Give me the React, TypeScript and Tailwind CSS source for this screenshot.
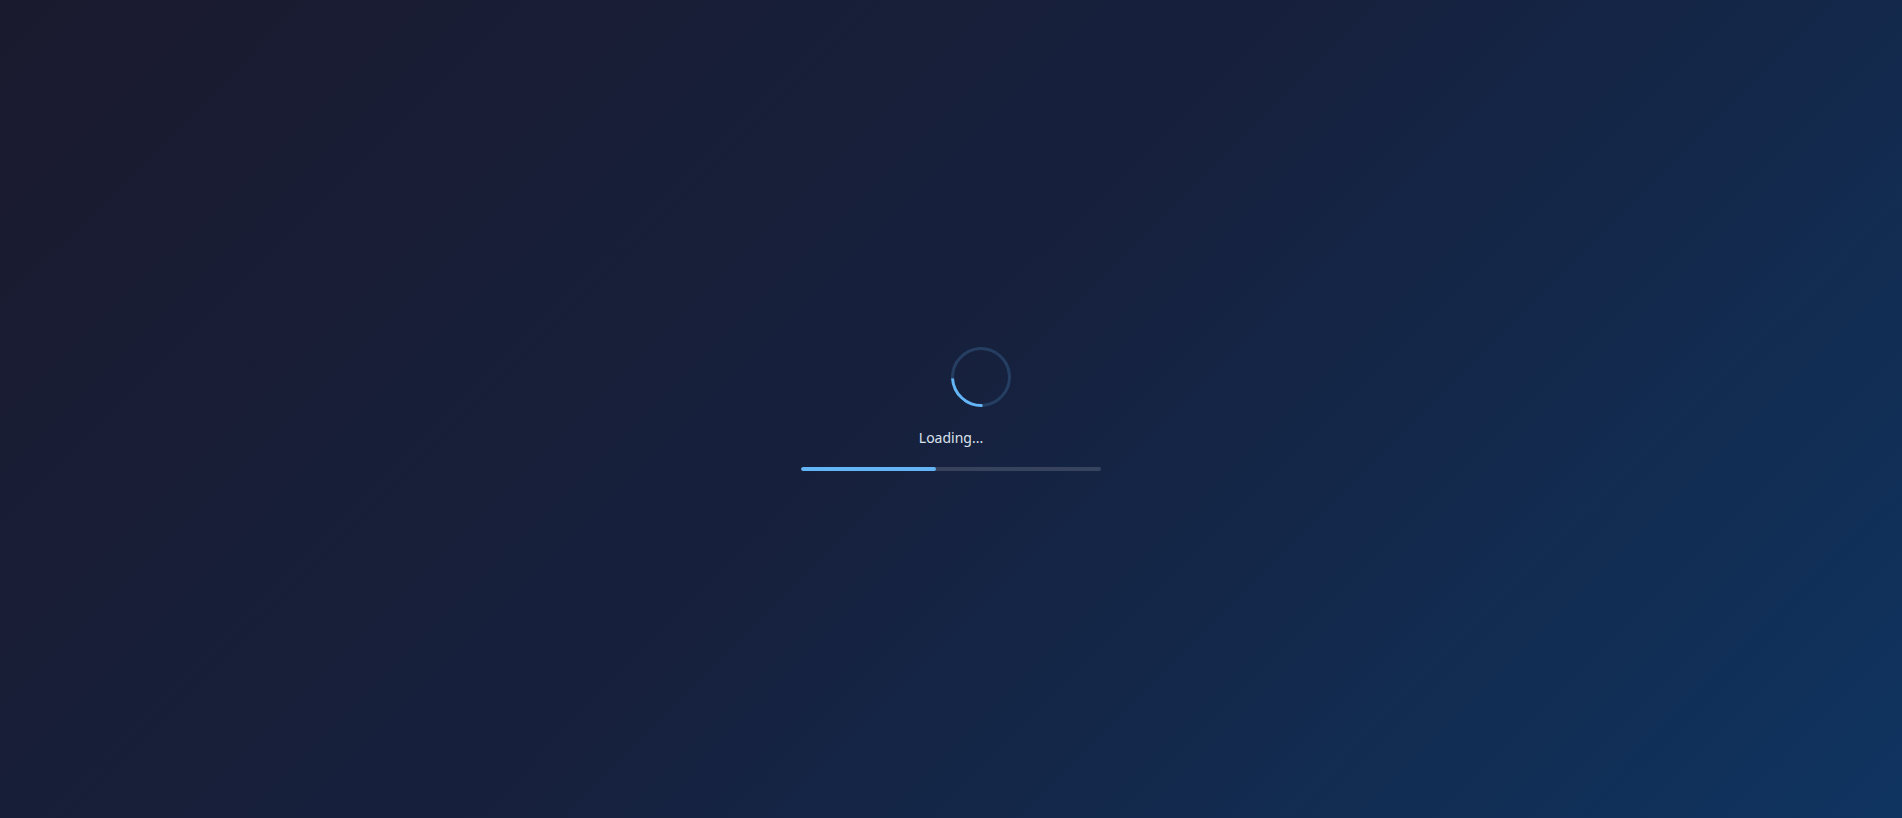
export default function App() {
  const progress = 45;

  return (
    <div className="w-full h-screen flex items-center justify-center bg-[linear-gradient(135deg,#1a1a2e_0%,#16213e_50%,#0f3460_100%)] font-['Noto_Sans',sans-serif]">
      <div className="flex flex-col items-center">
        <div className="w-[60px] h-[60px] ml-[60px] rounded-full border-[3px] border-[#64b5f6]/20 border-b-[#64b5f6] rotate-[42deg]" />
        <p className="mt-[21px] text-sm leading-5 text-[#dbe2ec]">Loading...</p>
        <div className="mt-[19px] w-[300px] h-1 rounded-full bg-white/15 overflow-hidden">
          <div className="h-full rounded-full bg-[#64b5f6]" style={{ width: `${progress}%` }} />
        </div>
      </div>
    </div>
  );
}
